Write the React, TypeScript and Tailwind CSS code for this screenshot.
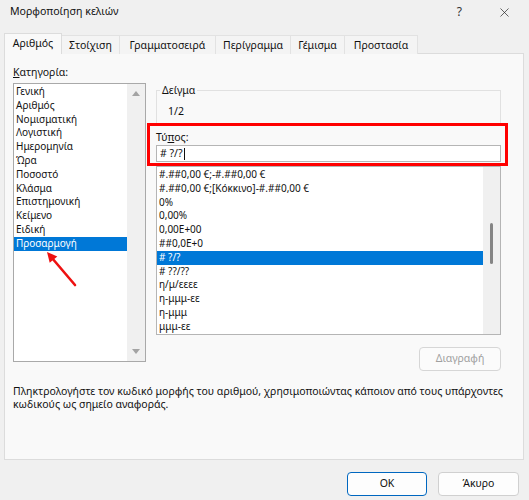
import { X } from "lucide-react";

const categories = [
  "Γενική",
  "Αριθμός",
  "Νομισματική",
  "Λογιστική",
  "Ημερομηνία",
  "Ώρα",
  "Ποσοστό",
  "Κλάσμα",
  "Επιστημονική",
  "Κείμενο",
  "Ειδική",
  "Προσαρμογή",
];

const formats = [
  "#.##0,00 €;-#.##0,00 €",
  "#.##0,00 €;[Κόκκινο]-#.##0,00 €",
  "0%",
  "0,00%",
  "0,00E+00",
  "##0,0E+0",
  "# ?/?",
  "# ??/??",
  "η/μ/εεεε",
  "η-μμμ-εε",
  "η-μμμ",
  "μμμ-εε",
];

const tabs = [
  { label: "Αριθμός", w: "w-[58px]" },
  { label: "Στοίχιση", w: "w-[58px]" },
  { label: "Γραμματοσειρά", w: "w-[96px]" },
  { label: "Περίγραμμα", w: "w-[75px]" },
  { label: "Γέμισμα", w: "w-[54px]" },
  { label: "Προστασία", w: "w-[73px]" },
];

export default function App() {
  return (
    <div className="relative w-[529px] h-[500px] overflow-hidden bg-[#f0f0f0] text-[10.5px] text-[#111] font-['Noto_Sans','Open_Sans',sans-serif]">
      {/* title bar */}
      <div className="h-[24px] flex items-center pl-[10px] pr-[17px]">
        <span className="text-[10.6px]">Μορφοποίηση κελιών</span>
        <span className="ml-auto text-[12px] text-[#333]">?</span>
        <X className="ml-[35px] text-[#222]" size={15} strokeWidth={1.1} />
      </div>

      {/* tabs */}
      <div className="mt-[9px] pl-[4px] flex items-end h-[21px] relative z-10">
        {tabs.map((t, i) =>
          i === 0 ? (
            <div
              key={t.label}
              className={`${t.w} h-[21px] flex items-center justify-center bg-[#f9f9f9] border border-b-0 border-[#dcdcdc]`}
            >
              {t.label}
            </div>
          ) : (
            <div
              key={t.label}
              className={`${t.w} h-[19px] pt-[1px] flex items-center justify-center bg-[#f4f4f4] border border-l-0 border-b-0 border-[#e2e2e2]`}
            >
              {t.label}
            </div>
          )
        )}
      </div>

      {/* panel */}
      <div className="-mt-px ml-[4px] w-[520px] h-[407px] bg-[#f9f9f9] border border-[#dcdcdc] pl-[8px] pt-[10px]">
        <div className="flex gap-[10px] h-[307px]">
          {/* category column */}
          <div className="w-[133px] flex flex-col">
            <div className="leading-[16px]">
              <span className="underline">Κ</span>ατηγορία:
            </div>
            <div className="mt-[3px] h-[279px] flex border border-[#a9a9a9] bg-white">
              <div className="flex-1 pt-[1px] text-[10px]">
                {categories.map((c, i) => (
                  <div
                    key={c}
                    className={`h-[13.8px] leading-[13.8px] pl-[2px] ${
                      i === categories.length - 1 ? "bg-[#0078d7] text-white" : ""
                    }`}
                  >
                    {c}
                  </div>
                ))}
              </div>
              <div className="w-[18px] bg-[#f0f0f0] flex flex-col items-center justify-between py-[7px]">
                <div className="w-0 h-0 border-l-[4px] border-r-[4px] border-b-[5px] border-l-transparent border-r-transparent border-b-[#a3a3a3]" />
                <div className="w-0 h-0 border-l-[4px] border-r-[4px] border-t-[5px] border-l-transparent border-r-transparent border-t-[#a3a3a3]" />
              </div>
            </div>
          </div>

          {/* right column */}
          <div className="w-[345px] flex flex-col">
            <fieldset className="mt-[20px] border border-[#e1e1e1] pb-[5px] pl-[11px]">
              <legend className="ml-[-8px] px-[2px] leading-[12px]">Δείγμα</legend>
              <div className="mt-[7px] leading-[16px]">1/2</div>
            </fieldset>
            <div className="mt-[4px] leading-[16px]">
              Τύ<span className="underline">π</span>ος:
            </div>
            <div className="h-[17px] border border-[#b5b5b5] bg-white pl-[3px] leading-[15px] flex items-center">
              # ?/?<span className="inline-block w-px h-[12px] bg-[#111] ml-[1px]" />
            </div>
            <div className="mt-[4px] h-[169px] flex border border-[#b5b5b5] bg-white overflow-hidden">
              <div className="flex-1 pt-[1px] text-[10px]">
                {formats.map((f, i) => (
                  <div
                    key={f}
                    className={`h-[13.8px] leading-[13.8px] pl-[2px] whitespace-nowrap ${
                      i === 6 ? "bg-[#0078d7] text-white" : ""
                    }`}
                  >
                    {f}
                  </div>
                ))}
              </div>
              <div className="w-[17px] bg-[#f0f0f0] flex justify-center">
                <div className="mt-[56px] w-[3px] h-[41px] rounded-full bg-[#858585]" />
              </div>
            </div>
            <button className="mt-[12px] self-end w-[82px] h-[24px] rounded-[4px] border border-[#d6d6d6] bg-[#fbfbfb] text-[#a0a0a0]">
              Διαγραφή
            </button>
          </div>
        </div>

        <p className="mt-[14px] leading-[13px] whitespace-nowrap">
          Πληκτρολογήστε τον κωδικό μορφής του αριθμού, χρησιμοποιώντας κάποιον από τους υπάρχοντες
          <br />
          κωδικούς ως σημείο αναφοράς.
        </p>
      </div>

      {/* dialog buttons */}
      <div className="mt-[12px] flex justify-end gap-[11px] pr-[10px]">
        <button className="w-[80px] h-[24px] rounded-[4px] border border-[#0067c0] bg-[#fdfdfd]">OK</button>
        <button className="w-[81px] h-[24px] rounded-[4px] border border-[#d0d0d0] bg-[#fdfdfd]">Άκυρο</button>
      </div>

      {/* annotations */}
      <div className="absolute left-[147px] top-[123px] w-[361px] h-[43px] border-[3px] border-[#ff0000]" />
      <svg className="absolute left-[40px] top-[245px]" width="45" height="48" viewBox="0 0 45 48">
        <line x1="35" y1="40" x2="12" y2="13" stroke="#ee1111" strokeWidth="2.6" strokeLinecap="round" />
        <polygon points="7,7 17.3,11.4 9.7,17.8" fill="#ee1111" />
      </svg>
    </div>
  );
}
